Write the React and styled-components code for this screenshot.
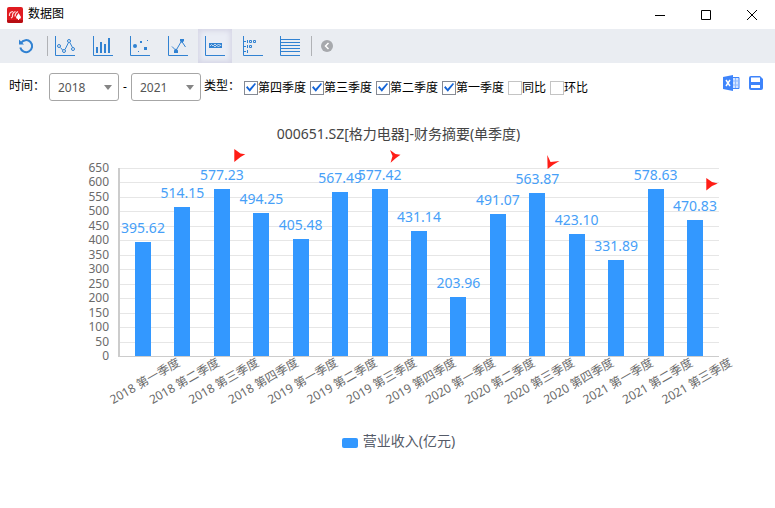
/**
 *
 * Financial summary chart window
 *
 */

import React, { useState } from 'react';
import styled, { createGlobalStyle } from 'styled-components';

const GlobalStyle = createGlobalStyle`
  * {
    box-sizing: border-box;
  }
  body {
    margin: 0;
    background: #fff;
    color: #000;
    font-family: 'Noto Sans', 'Noto Sans CJK SC', sans-serif;
    font-size: 12px;
  }
`;

const TitleBar = styled.header`
  display: flex;
  align-items: center;
  height: 29px;
  padding-left: 7px;
`;

const WindowTitle = styled.h1`
  flex: 1;
  margin: 0 0 0 5px;
  font-size: 12px;
  font-weight: 400;
  line-height: 26px;
  padding-bottom: 2px;
`;

const IconButton = styled.button`
  display: flex;
  align-items: center;
  justify-content: center;
  padding: 0;
  border: none;
  background: transparent;
  cursor: pointer;
`;

const WindowButton = styled(IconButton)`
  width: 46px;
  height: 26px;
`;

const Toolbar = styled.div`
  display: flex;
  align-items: center;
  height: 34px;
  padding-left: 9px;
  background: #eaedf2;
`;

const ToolButton = styled(IconButton)`
  width: 34px;
  height: 34px;
  background: ${(props) => (props.$active ? '#eaedf5' : 'transparent')};
  box-shadow: ${(props) => (props.$active ? 'inset 0 0 5px 2px #d6d6e6' : 'none')};
`;

const ChartTypes = styled.div`
  display: flex;
  justify-content: space-between;
  width: 259px;
`;

const Separator = styled.span`
  width: 1px;
  height: 20px;
  margin-left: 4px;
  background: #b0b2b6;
`;

const CollapseButton = styled(IconButton)`
  width: 30px;
  height: 34px;
`;

const Filters = styled.form`
  display: flex;
  align-items: center;
  padding: 10px 12px 0 9px;
  line-height: 16px;
`;

const FilterLabel = styled.span`
  width: 40px;
  white-space: nowrap;
  padding-bottom: 2px;
`;

const TypeLabel = styled(FilterLabel)`
  margin-left: 3px;
`;

const SelectBox = styled.span`
  display: grid;
  align-items: center;
  width: 70px;
  height: 28px;

  & > * {
    grid-area: 1 / 1;
  }
  & > svg {
    justify-self: end;
    margin-right: 7px;
    pointer-events: none;
  }
`;

const YearSelect = styled.select`
  appearance: none;
  width: 100%;
  height: 28px;
  padding: 2px 0 0 8px;
  border: 1px solid #a6a6a6;
  border-radius: 3px;
  background: #fff;
  color: #555;
  font: inherit;
`;

const Dash = styled.span`
  width: 12px;
  text-align: center;
`;

const CheckGroup = styled.div`
  display: flex;
  flex: 1;
  gap: 4px;
  padding-top: 1px;
`;

const CheckLabel = styled.label`
  display: flex;
  align-items: center;
  white-space: nowrap;
`;

const Checkbox = styled.input`
  appearance: none;
  display: grid;
  place-items: center;
  width: 14px;
  height: 14px;
  margin: 0;
  border: 1px solid ${(props) => (props.checked ? '#858a94' : '#c4c4c4')};
  background: #fff;

  &:checked::before {
    content: '';
    width: 10px;
    height: 10px;
    background: #1565d8;
    clip-path: polygon(0 50%, 14% 36%, 36% 62%, 88% 4%, 100% 16%, 38% 92%);
  }
`;

const Exports = styled.div`
  display: flex;
  gap: 9px;
  padding-bottom: 8px;
`;

const ChartPanel = styled.figure`
  display: flex;
  flex-direction: column;
  align-items: center;
  margin: 0;
  padding-top: 23px;
`;

const ChartTitle = styled.h2`
  margin: 0;
  padding-left: 22px;
  color: #444;
  font-size: 14px;
  font-weight: 400;
  line-height: 20px;
`;

const Plot = styled.svg`
  display: block;
  width: 100%;
  height: auto;
`;

const AxisText = styled.text`
  fill: #6b6b6b;
  font-size: 12px;
`;

const ValueText = styled.text`
  fill: #479ff8;
  font-size: 14px;
`;

const Legend = styled.figcaption`
  display: flex;
  align-items: center;
  gap: 5px;
  padding: 16px 0 0 22px;
  color: #555b68;
  font-size: 14px;
  line-height: 20px;
`;

const Swatch = styled.span`
  width: 16px;
  height: 10px;
  margin-top: 3px;
  border-radius: 2px;
  background: #3398ff;
`;

const QUARTERS = [
  { label: '2018 第一季度', value: 395.62 },
  { label: '2018 第二季度', value: 514.15 },
  { label: '2018 第三季度', value: 577.23 },
  { label: '2018 第四季度', value: 494.25 },
  { label: '2019 第一季度', value: 405.48 },
  { label: '2019 第二季度', value: 567.49 },
  { label: '2019 第三季度', value: 577.42 },
  { label: '2019 第四季度', value: 431.14 },
  { label: '2020 第一季度', value: 203.96 },
  { label: '2020 第二季度', value: 491.07 },
  { label: '2020 第三季度', value: 563.87 },
  { label: '2020 第四季度', value: 423.1 },
  { label: '2021 第一季度', value: 331.89 },
  { label: '2021 第二季度', value: 578.63 },
  { label: '2021 第三季度', value: 470.83 },
];

const YEARS = ['2018', '2019', '2020', '2021'];

const MARKS = [
  'M234.300 4L240.500 8.500 245.300 9.300 240.500 12 234.300 17z',
  'M390 5L395.500 9 400.500 9.800 396 13 390.600 17.700 392.500 11z',
  'M547.300 10L550.500 17 559.500 16 553.500 19.500 547.600 24z',
  'M706.300 33L712 37 717.800 38.600 712 41 706.300 45.500z',
];

// chart type icons all share the same L shaped axis
const TYPES = [
  {
    name: '折线图',
    shape: (
      <>
        <path d="M5.500 11.500l2 2.500M10 13.500l3.500-7M14.800 6.500l2.700 5" />
        <circle cx="4" cy="10" r="1.500" />
        <circle cx="9" cy="15" r="1.500" />
        <circle cx="14" cy="5" r="1.500" />
        <circle cx="18" cy="13" r="1.500" />
      </>
    ),
  },
  { name: '柱状图', shape: <path strokeWidth="2" d="M4 17v-6M8 17V6M12 17V8M16 17V2" /> },
  {
    name: '散点图',
    shape: (
      <g fill="currentColor" stroke="none">
        <circle cx="5" cy="10" r="2" />
        <path d="M10 5h2v2h-2zM14 11h3v3h-3zM8 15h1v1H8zM17 4h1v1h-1z" />
      </g>
    ),
  },
  {
    name: '极值图',
    shape: (
      <>
        <path d="M4 10.500l4 4 5.500-9.500 4 6" />
        <path fill="currentColor" stroke="none" d="M12 3h4v2l-2 2-2-2zM8 12.500l2 2V17H6v-2.500z" />
      </>
    ),
  },
  {
    name: '数值',
    shape: (
      <>
        <path fill="currentColor" stroke="none" d="M4 7h13v5H4z" />
        <path
          stroke="#eaedf5"
          strokeWidth=".8"
          d="M5 10l1.500-1.500L8 10M8.500 9.500L10 8l1.500 1.500L10 11zM12 9.500L13.500 8 15 9.500 13.500 11zM15 8.500l1 1.500"
        />
      </>
    ),
  },
  {
    name: '刻度',
    shape: (
      <>
        <path d="M1 5.500h2M1 10.500h2M1 15.500h2M4.500 4v3M4.500 9v3M4.500 14v3" />
        <path d="M6.500 4.500h2v2h-2zM10.500 4.500h2v2h-2zM6.500 9.500h2v2h-2z" />
      </>
    ),
  },
  {
    name: '网格线',
    shape: <path d="M1 3.500h19M1 6.500h19M1 9.500h19M1 12.500h19M1 15.500h19" />,
  },
];

function AppLogo() {
  return (
    <svg width="16" height="16" viewBox="0 0 16 16" aria-hidden="true">
      <rect width="16" height="16" rx="2" fill="#e01b20" />
      <path d="M0 13h16v1a2 2 0 0 1-2 2H2a2 2 0 0 1-2-2z" fill="#b70d12" />
      <path
        d="M2.500 9Q2 5 6 4.500M5.500 10Q5 5.500 8.500 4.500M8 9.500Q8 6 11 4.500M4 11l1.500-1"
        fill="none"
        stroke="#ffd6d6"
        strokeWidth="1.200"
      />
      <path d="M11.500 6l2.500 4a2 2 0 0 1-2 2v1h-1v-1a2 2 0 0 1-2-2z" fill="#fff" />
    </svg>
  );
}

function YearPicker({ label, value, onChange }) {
  return (
    <SelectBox>
      <YearSelect aria-label={label} value={value} onChange={(e) => onChange(e.target.value)}>
        {YEARS.map((year) => (
          <option key={year}>{year}</option>
        ))}
      </YearSelect>
      <svg width="8" height="5" viewBox="0 0 8 5" aria-hidden="true">
        <path d="M0 0h8L4 5z" fill="#858585" />
      </svg>
    </SelectBox>
  );
}

function RevenueChart() {
  const base = 212;
  const scale = (value) => (value * 188) / 650;
  const center = (index) => 143 + (index * 552) / 14;
  const ticks = Array.from({ length: 14 }, (_, i) => i * 50);

  return (
    <Plot viewBox="0 -1 775 271" role="img" aria-label="营业收入(亿元)">
      {ticks.map((tick) => {
        const y = Math.round(base - 1 - scale(tick));
        return (
          <g key={tick}>
            <path d={`M119 ${y + 0.5}H719`} stroke="#e6e6e6" />
            <AxisText x="109" y={y + 4} textAnchor="end">{tick}</AxisText>
          </g>
        );
      })}
      {QUARTERS.map((item, index) => {
        const x = Math.round(center(index)) - 8;
        const y = Math.round(base - 1 - scale(item.value));
        return (
          <rect key={item.label} x={x} y={y} width="16" height={base - 1 - y} fill="#3398ff" />
        );
      })}
      <path d="M119 23v188" stroke="#ccc" strokeWidth="2" />
      <path d="M118 211.500h601" stroke="#ccc" />
      {QUARTERS.map((item, index) => (
        <g key={item.label}>
          <ValueText x={center(index)} y={base - scale(item.value) - 10} textAnchor="middle">
            {item.value.toFixed(2)}
          </ValueText>
          <AxisText textAnchor="end" transform={`translate(${center(index) + 38} 220) rotate(-30)`}>
            {item.label}
          </AxisText>
        </g>
      ))}
      {MARKS.map((d) => (
        <path key={d} d={d} fill="#ff1d16" />
      ))}
    </Plot>
  );
}

export default function App() {
  const [from, setFrom] = useState('2018');
  const [to, setTo] = useState('2021');
  const [active, setActive] = useState('数值');
  const [checks, setChecks] = useState({
    第四季度: true,
    第三季度: true,
    第二季度: true,
    第一季度: true,
    同比: false,
    环比: false,
  });

  const toggle = (name) => setChecks({ ...checks, [name]: !checks[name] });

  return (
    <>
      <GlobalStyle />
      <TitleBar>
        <AppLogo />
        <WindowTitle>数据图</WindowTitle>
        <WindowButton aria-label="最小化">
          <svg width="10" height="10" stroke="#000"><path d="M0 5.500h10" /></svg>
        </WindowButton>
        <WindowButton aria-label="最大化">
          <svg width="10" height="10" stroke="#000" fill="none"><path d="M.5.5h9v9h-9z" /></svg>
        </WindowButton>
        <WindowButton aria-label="关闭">
          <svg width="10" height="10" stroke="#000"><path d="M0 0l10 10M10 0L0 10" /></svg>
        </WindowButton>
      </TitleBar>

      <Toolbar>
        <ToolButton aria-label="刷新">
          <svg width="16" height="16" viewBox="0 0 16 16" fill="none" stroke="#3182d2" strokeWidth="2">
            <path d="M3 5A6 6 0 1 1 2.300 9.500" />
            <path d="M1 1.500V6.500h5z" fill="#3182d2" stroke="none" />
          </svg>
        </ToolButton>
        <Separator />
        <ChartTypes>
          {TYPES.map((type) => (
            <ToolButton
              key={type.name}
              aria-label={type.name}
              $active={active === type.name}
              onClick={() => setActive(type.name)}
            >
              <svg width="20" height="20" viewBox="0 0 20 20" fill="none" stroke="currentColor" color="#3182d2">
                <path d="M.5 0v19.500H20" />
                {type.shape}
              </svg>
            </ToolButton>
          ))}
        </ChartTypes>
        <Separator />
        <CollapseButton aria-label="收起">
          <svg width="12" height="12" viewBox="0 0 12 12" fill="none">
            <circle cx="6" cy="6" r="6" fill="#a7a9ad" />
            <path d="M7.500 3l-3 3 3 3" stroke="#fff" strokeWidth="1.500" />
          </svg>
        </CollapseButton>
      </Toolbar>

      <Filters onSubmit={(e) => e.preventDefault()}>
        <FilterLabel>时间：</FilterLabel>
        <YearPicker label="开始年份" value={from} onChange={setFrom} />
        <Dash>-</Dash>
        <YearPicker label="结束年份" value={to} onChange={setTo} />
        <TypeLabel>类型：</TypeLabel>
        <CheckGroup>
          {Object.keys(checks).map((name) => (
            <CheckLabel key={name}>
              <Checkbox type="checkbox" checked={checks[name]} onChange={() => toggle(name)} />
              {name}
            </CheckLabel>
          ))}
        </CheckGroup>
        <Exports>
          <IconButton type="button" aria-label="导出Excel">
            <svg width="17" height="16" viewBox="0 0 17 16" fill="none">
              <path d="M8 2.500h8v11H8z" fill="#d5e5ff" stroke="#3e84fb" />
              <path d="M12.500 3v10M9 6h7M9 10h7" stroke="#8fb8ff" />
              <path d="M0 2l10-2v16L0 14z" fill="#3e84fb" />
              <path d="M3 5l4 6M7 5l-4 6" stroke="#fff" strokeWidth="1.500" />
            </svg>
          </IconButton>
          <IconButton type="button" aria-label="保存">
            <svg width="14" height="14" viewBox="0 0 14 14">
              <path d="M2 0h9l3 3v9a2 2 0 0 1-2 2H2a2 2 0 0 1-2-2V2a2 2 0 0 1 2-2z" fill="#3e84fb" />
              <path d="M2 1.500h9V6H2zM2 9h9v3H2z" fill="#fff" />
            </svg>
          </IconButton>
        </Exports>
      </Filters>

      <ChartPanel>
        <ChartTitle>000651.SZ[格力电器]-财务摘要(单季度)</ChartTitle>
        <RevenueChart />
        <Legend>
          <Swatch />
          营业收入(亿元)
        </Legend>
      </ChartPanel>
    </>
  );
}
